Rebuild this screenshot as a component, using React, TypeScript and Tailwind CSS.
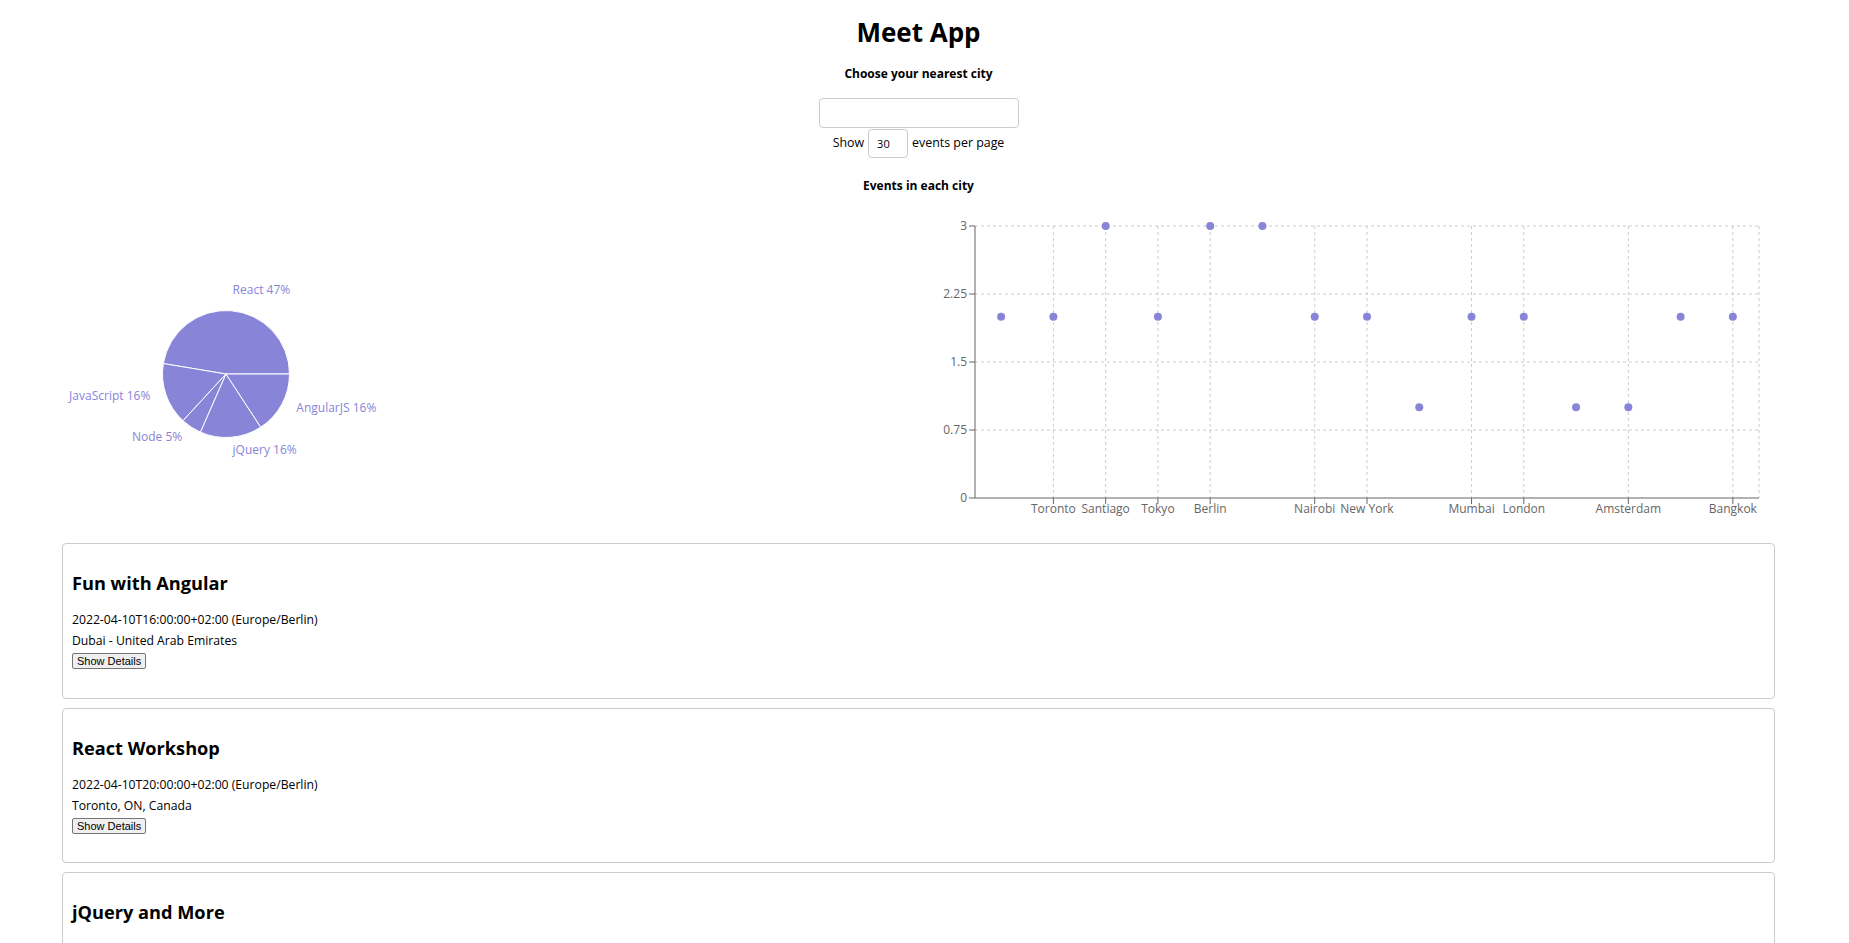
import React from 'react';

type Slice = { name: string; value: number };
type CityPoint = { city: string; count: number; showTick: boolean };

const PIE_DATA: Slice[] = [
  { name: 'React', value: 9 },
  { name: 'JavaScript', value: 3 },
  { name: 'Node', value: 1 },
  { name: 'jQuery', value: 3 },
  { name: 'AngularJS', value: 3 },
];

const CITY_DATA: CityPoint[] = [
  { city: 'Dubai', count: 2, showTick: false },
  { city: 'Toronto', count: 2, showTick: true },
  { city: 'Santiago', count: 3, showTick: true },
  { city: 'Tokyo', count: 2, showTick: true },
  { city: 'Berlin', count: 3, showTick: true },
  { city: 'Moscow', count: 3, showTick: false },
  { city: 'Nairobi', count: 2, showTick: true },
  { city: 'New York', count: 2, showTick: true },
  { city: 'Sydney', count: 1, showTick: false },
  { city: 'Mumbai', count: 2, showTick: true },
  { city: 'London', count: 2, showTick: true },
  { city: 'Paris', count: 1, showTick: false },
  { city: 'Amsterdam', count: 1, showTick: true },
  { city: 'Seoul', count: 2, showTick: false },
  { city: 'Bangkok', count: 2, showTick: true },
];

const EVENTS = [
  {
    id: 1,
    summary: 'Fun with Angular',
    start: '2022-04-10T16:00:00+02:00',
    timeZone: 'Europe/Berlin',
    location: 'Dubai - United Arab Emirates',
  },
  {
    id: 2,
    summary: 'React Workshop',
    start: '2022-04-10T20:00:00+02:00',
    timeZone: 'Europe/Berlin',
    location: 'Toronto, ON, Canada',
  },
  {
    id: 3,
    summary: 'jQuery and More',
    start: '2022-04-11T16:00:00+02:00',
    timeZone: 'Europe/Berlin',
    location: 'Santiago, Santiago Metropolitan Region, Chile',
  },
];

const PURPLE = '#8884d8';

function polar(cx: number, cy: number, r: number, deg: number) {
  const rad = (deg * Math.PI) / 180;
  return { x: cx + r * Math.cos(rad), y: cy - r * Math.sin(rad) };
}

function GenrePie() {
  const cx = 226;
  const cy = 178;
  const r = 63.5;
  const total = PIE_DATA.reduce((s, d) => s + d.value, 0);
  let angle = 0;

  return (
    <svg width="918" height="347" className="block">
      {PIE_DATA.map((d) => {
        const start = angle;
        const sweep = (d.value / total) * 360;
        const end = start + sweep;
        angle = end;
        const p1 = polar(cx, cy, r, start);
        const p2 = polar(cx, cy, r, end);
        const large = sweep > 180 ? 1 : 0;
        const mid = start + sweep / 2;
        const lp = polar(cx, cy, 80, mid);
        const pct = Math.round((d.value / total) * 100);
        return (
          <g key={d.name}>
            <path
              d={`M${cx},${cy} L${p1.x},${p1.y} A${r},${r} 0 ${large} 0 ${p2.x},${p2.y} Z`}
              fill={PURPLE}
              stroke="#fff"
              strokeWidth={1}
            />
            <text
              x={lp.x}
              y={lp.y}
              fill={PURPLE}
              fontSize={12}
              textAnchor={lp.x > cx ? 'start' : 'end'}
            >
              {d.name} {pct}%
            </text>
          </g>
        );
      })}
    </svg>
  );
}

function CityScatter() {
  // page x minus 918, page y minus 196
  const left = 57;
  const right = 841;
  const top = 30;
  const bottom = 302;
  const band = (right - left) / CITY_DATA.length;
  const yMax = 3;
  const yTicks = [0, 0.75, 1.5, 2.25, 3];
  const toY = (v: number) => bottom - ((bottom - top) * v) / yMax;
  const xs = CITY_DATA.map((_, i) => left + band * (i + 0.5));

  return (
    <svg width="919" height="347" className="block">
      {yTicks
        .filter((t) => t > 0)
        .map((t) => (
          <line
            key={t}
            x1={left}
            x2={right}
            y1={toY(t)}
            y2={toY(t)}
            stroke="#ccc"
            strokeDasharray="3 3"
          />
        ))}
      {CITY_DATA.map((d, i) =>
        d.showTick ? (
          <line
            key={d.city}
            x1={xs[i]}
            x2={xs[i]}
            y1={top}
            y2={bottom}
            stroke="#ccc"
            strokeDasharray="3 3"
          />
        ) : null
      )}
      <line x1={right} x2={right} y1={top} y2={bottom} stroke="#ccc" strokeDasharray="3 3" />

      <line x1={left} x2={left} y1={top} y2={bottom} stroke="#666" />
      <line x1={left} x2={right} y1={bottom} y2={bottom} stroke="#666" />

      {yTicks.map((t) => (
        <g key={t}>
          <line x1={left - 6} x2={left} y1={toY(t)} y2={toY(t)} stroke="#666" />
          <text x={left - 8} y={toY(t) + 4} fontSize={12} fill="#666" textAnchor="end">
            {t}
          </text>
        </g>
      ))}

      {CITY_DATA.map((d, i) =>
        d.showTick ? (
          <g key={d.city}>
            <line x1={xs[i]} x2={xs[i]} y1={bottom} y2={bottom + 6} stroke="#666" />
            <text x={xs[i]} y={bottom + 15} fontSize={12} fill="#666" textAnchor="middle">
              {d.city}
            </text>
          </g>
        ) : null
      )}

      {CITY_DATA.map((d, i) => (
        <circle key={d.city} cx={xs[i]} cy={toY(d.count)} r={4} fill={PURPLE} />
      ))}
    </svg>
  );
}

function EventCard({ event }: { event: (typeof EVENTS)[number] }) {
  return (
    <li className="h-[155.5px] rounded-[4px] border border-[#cccccc] pl-[9px] pt-[27px] text-left">
      <h3 className="text-[18.2px] font-bold leading-[24px] text-black">{event.summary}</h3>
      <p className="mt-[14px] text-[12.2px] leading-[21px]">
        {event.start} ({event.timeZone})
      </p>
      <p className="text-[12.2px] leading-[21px]">{event.location}</p>
      <button className="mt-[2px] block h-[16px] rounded-[2px] border border-[#767676] bg-[#efefef] px-[4px] font-['Liberation_Sans',Arial,sans-serif] text-[11px] leading-[14px] text-black">
        Show Details
      </button>
    </li>
  );
}

export default function App() {
  return (
    <div className="w-[1837px] bg-white font-['Open_Sans',sans-serif] text-black">
      <div className="flex flex-col items-center">
        <h1 className="mt-[14px] text-[26px] font-bold leading-[36px]">Meet App</h1>
        <h4 className="mt-[16px] text-[12px] font-bold leading-[16px]">Choose your nearest city</h4>
        <input
          type="text"
          className="mt-[16px] h-[30px] w-[200px] rounded-[4px] border border-[#cccccc] px-2 text-[12px] outline-none"
        />
        <div className="mt-[1px] flex items-center gap-[4px] text-[12.4px]">
          <span>Show</span>
          <input
            type="number"
            defaultValue={30}
            className="h-[29px] w-[40px] rounded-[4px] border border-[#cccccc] pl-[8px] text-[11px] outline-none [appearance:textfield]"
          />
          <span>events per page</span>
        </div>
        <h4 className="mt-[20px] text-[12px] font-bold leading-[16px]">Events in each city</h4>
      </div>

      <div className="mt-[2px] flex h-[347px]">
        <div className="w-[918px] shrink-0">
          <GenrePie />
        </div>
        <div className="flex-1">
          <CityScatter />
        </div>
      </div>

      <ul className="mx-[62px] flex flex-col gap-[9px] pb-[20px]">
        {EVENTS.map((e) => (
          <EventCard key={e.id} event={e} />
        ))}
      </ul>
    </div>
  );
}
